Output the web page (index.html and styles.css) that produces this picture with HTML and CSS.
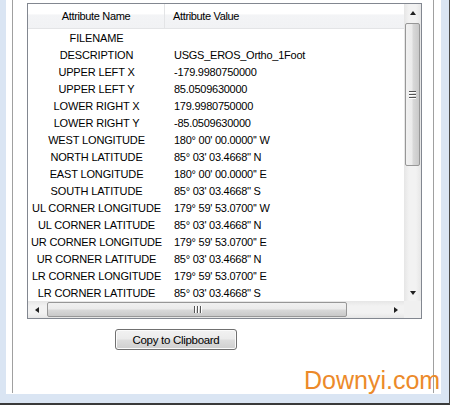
FILE: index.html
```html
<!DOCTYPE html>
<html>
<head>
<meta charset="utf-8">
<link rel="stylesheet" href="styles.css">
</head>
<body>
<div class="screen">
  <div class="frame">
    <div class="panel">
      <div class="listbox">
        <div class="viewport">
          <div class="header">
            <div class="hcell name">Attribute Name</div>
            <div class="hcell value">Attribute Value</div>
          </div>
          <div class="rows">
            <div class="row"><span class="n">FILENAME</span><span class="v"></span></div>
            <div class="row"><span class="n">DESCRIPTION</span><span class="v">USGS_EROS_Ortho_1Foot</span></div>
            <div class="row"><span class="n">UPPER LEFT X</span><span class="v">-179.9980750000</span></div>
            <div class="row"><span class="n">UPPER LEFT Y</span><span class="v">85.0509630000</span></div>
            <div class="row"><span class="n">LOWER RIGHT X</span><span class="v">179.9980750000</span></div>
            <div class="row"><span class="n">LOWER RIGHT Y</span><span class="v">-85.0509630000</span></div>
            <div class="row"><span class="n">WEST LONGITUDE</span><span class="v">180° 00' 00.0000'' W</span></div>
            <div class="row"><span class="n">NORTH LATITUDE</span><span class="v">85° 03' 03.4668'' N</span></div>
            <div class="row"><span class="n">EAST LONGITUDE</span><span class="v">180° 00' 00.0000'' E</span></div>
            <div class="row"><span class="n">SOUTH LATITUDE</span><span class="v">85° 03' 03.4668'' S</span></div>
            <div class="row"><span class="n">UL CORNER LONGITUDE</span><span class="v">179° 59' 53.0700'' W</span></div>
            <div class="row"><span class="n">UL CORNER LATITUDE</span><span class="v">85° 03' 03.4668'' N</span></div>
            <div class="row"><span class="n">UR CORNER LONGITUDE</span><span class="v">179° 59' 53.0700'' E</span></div>
            <div class="row"><span class="n">UR CORNER LATITUDE</span><span class="v">85° 03' 03.4668'' N</span></div>
            <div class="row"><span class="n">LR CORNER LONGITUDE</span><span class="v">179° 59' 53.0700'' E</span></div>
            <div class="row"><span class="n">LR CORNER LATITUDE</span><span class="v">85° 03' 03.4668'' S</span></div>
          </div>
        </div>
        <div class="vscroll">
          <div class="sbtn"><span class="tri up"></span></div>
          <div class="vtrack">
            <div class="vthumb"><span class="grip-h"></span><span class="grip-h"></span><span class="grip-h"></span></div>
          </div>
          <div class="sbtn"><span class="tri down"></span></div>
        </div>
        <div class="hscroll">
          <div class="sbtn"><span class="tri left"></span></div>
          <div class="htrack">
            <div class="hthumb"><span class="grip-v"></span><span class="grip-v"></span><span class="grip-v"></span></div>
          </div>
          <div class="sbtn"><span class="tri right"></span></div>
        </div>
        <div class="corner"></div>
      </div>
      <div class="btnrow">
        <button class="copy">Copy to Clipboard</button>
      </div>
    </div>
  </div>
  <div class="watermark">Downyi.com</div>
</div>
</body>
</html>
```
FILE: styles.css
```css
html, body {
  margin: 0;
  padding: 0;
  background: #ffffff;
}
body {
  font-family: "Liberation Sans", Arial, sans-serif;
  font-size: 11px;
  color: #000;
}
.screen {
  position: relative;
  width: 449px;
  height: 403px;
  background: #dae5f3;
  border-right: 1px solid #4a4a4a;
  border-bottom: 2px solid #3a3a3a;
}
.frame {
  margin-left: 6px;
  width: 435px;
  height: 394px;
  background: #ffffff;
}
.panel {
  margin-left: 6px;
  width: 420px;
  height: 393px;
  border-left: 1px solid #a0a0a0;
  border-right: 1px solid #a0a0a0;
  display: flex;
  flex-direction: column;
}
.listbox {
  margin-top: 3px;
  margin-left: 14px;
  width: 393px;
  height: 314px;
  border: 1px solid #828790;
  display: grid;
  grid-template-columns: 376px 17px;
  grid-template-rows: 297px 17px;
  background: #fff;
}
.viewport {
  overflow: hidden;
}
.header {
  display: flex;
  height: 24px;
  border-bottom: 1px solid #e3e4e6;
  background: linear-gradient(#ffffff 0, #ffffff 42%, #f3f4f6 45%, #f1f2f4 100%);
}
.hcell {
  display: flex;
  align-items: center;
  letter-spacing: -0.35px;
}
.hcell.name {
  width: 136px;
  border-right: 1px solid #e3e4e6;
  justify-content: center;
}
.hcell.value {
  padding-left: 8px;
}
.row {
  display: flex;
  height: 17px;
  align-items: center;
  white-space: nowrap;
}
.row .n {
  width: 137px;
  text-align: center;
  letter-spacing: -0.15px;
}
.row .v {
  padding-left: 9px;
  letter-spacing: -0.25px;
}
.vscroll {
  display: flex;
  flex-direction: column;
  background: linear-gradient(90deg, #e6e6e6, #f2f2f2 30%, #f2f2f2 70%, #e6e6e6);
}
.hscroll {
  display: flex;
  background: linear-gradient(#e6e6e6, #f2f2f2 30%, #f2f2f2 70%, #e6e6e6);
}
.corner {
  background: #f0f0f0;
}
.sbtn {
  width: 17px;
  height: 17px;
  flex: none;
  display: flex;
  align-items: center;
  justify-content: center;
}
.vtrack {
  flex: 1;
  padding-top: 2px;
}
.htrack {
  flex: 1;
  padding-left: 2px;
  display: flex;
  align-items: center;
}
.vthumb {
  width: 13px;
  margin-left: 1px;
  height: 141px;
  border: 1px solid #979797;
  border-radius: 2px;
  background: linear-gradient(90deg, #f1f1f1 0, #ebebeb 45%, #d8d8d8 55%, #c9c9c9 100%);
  display: flex;
  flex-direction: column;
  align-items: center;
  justify-content: center;
  gap: 2px;
}
.grip-h {
  width: 7px;
  height: 1px;
  background: #555;
  box-shadow: 0 1px 0 #fff;
}
.hthumb {
  width: 298px;
  height: 13px;
  border: 1px solid #979797;
  border-radius: 2px;
  background: linear-gradient(#f1f1f1 0, #ebebeb 45%, #d8d8d8 55%, #c9c9c9 100%);
  display: flex;
  align-items: center;
  justify-content: center;
  gap: 2px;
}
.grip-v {
  width: 1px;
  height: 7px;
  background: #555;
  box-shadow: 1px 0 0 #fff;
}
.tri {
  width: 0;
  height: 0;
  border-style: solid;
}
.tri.up {
  border-width: 0 3.5px 4px 3.5px;
  border-color: transparent transparent #202020 transparent;
}
.tri.down {
  border-width: 4px 3.5px 0 3.5px;
  border-color: #202020 transparent transparent transparent;
}
.tri.left {
  border-width: 3.5px 4px 3.5px 0;
  border-color: transparent #202020 transparent transparent;
}
.tri.right {
  border-width: 3.5px 0 3.5px 4px;
  border-color: transparent transparent transparent #202020;
}
.btnrow {
  padding-top: 10px;
  padding-left: 102px;
}
.copy {
  width: 122px;
  height: 21px;
  padding: 0;
  border: 1px solid #707070;
  border-radius: 3px;
  background: linear-gradient(#f2f2f2 0, #ebebeb 48%, #dddddd 52%, #cfcfcf 100%);
  box-shadow: inset 0 0 0 1px #fbfbfb;
  font-family: "Liberation Sans", Arial, sans-serif;
  font-size: 11.5px;
  letter-spacing: -0.3px;
  color: #000;
}
.watermark {
  position: absolute;
  left: 304px;
  top: 365px;
  font-family: "Liberation Sans", Arial, sans-serif;
  font-size: 25px;
  color: #ec8a2a;
  line-height: 30px;
}
```
